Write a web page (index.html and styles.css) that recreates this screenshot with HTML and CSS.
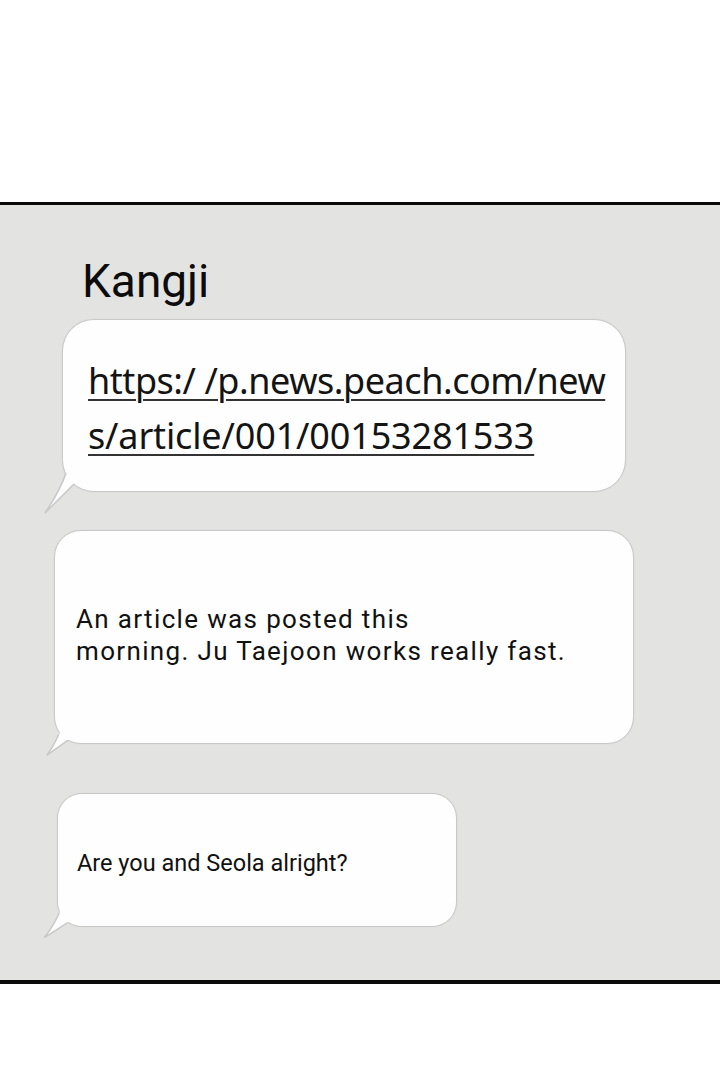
FILE: index.html
```html
<!DOCTYPE html>
<html lang="en">
<head>
<meta charset="utf-8">
<title>Kangji</title>
<link rel="stylesheet" href="styles.css">
</head>
<body>
<div class="top-space"></div>
<section class="panel">
  <h1 class="name">Kangji</h1>
  <div class="bubble bubble-link">
    <p class="link-text"><span class="u">https:/ /p.news.peach.com/new</span><br><span class="u u-wide">s/article/001/00153281533</span></p>
    <svg class="tail" width="50" height="50" viewBox="0 0 50 50">
      <path class="tail-fill" d="M24 10 Q18 28 3 50 L32 21 L36 17 L28 8 Z"/>
      <path class="tail-stroke" d="M24 10 Q18 28 3 50 L32 21"/>
    </svg>
  </div>
  <div class="bubble bubble-msg">
    <p class="msg-text">An article was posted this<br>morning. Ju Taejoon works really fast.</p>
    <svg class="tail" width="50" height="50" viewBox="0 0 50 50">
      <path class="tail-fill" d="M24.7 19.3 Q20 31 12.7 40.3 L33.7 25.3 L37 21 L29 15 Z"/>
      <path class="tail-stroke" d="M24.7 19.3 Q20 31 12.7 40.3 L33.7 25.3"/>
    </svg>
  </div>
  <div class="bubble bubble-short">
    <p class="short-text">Are you and Seola alright?</p>
    <svg class="tail" width="50" height="50" viewBox="0 0 50 50">
      <path class="tail-fill" d="M22.3 14.7 Q16.5 28 7.3 39.7 L30.7 24.7 L35 20 L27 11 Z"/>
      <path class="tail-stroke" d="M22.3 14.7 Q16.5 28 7.3 39.7 L30.7 24.7"/>
    </svg>
  </div>
</section>
</body>
</html>
```

FILE: styles.css
```css
* { box-sizing: border-box; }

html, body {
  margin: 0;
  padding: 0;
  background: #ffffff;
}

body {
  width: 720px;
  height: 1080px;
  overflow: hidden;
  font-family: Roboto, "Liberation Sans", sans-serif;
  color: #111111;
}

.top-space {
  height: 202px;
}

.panel {
  height: 782px;
  background: #e3e3e1;
  border-top: 3px solid #0a0a0a;
  border-bottom: 4px solid #0a0a0a;
  padding-top: 53px;
  display: flex;
  flex-direction: column;
  align-items: flex-start;
}

.name {
  margin: 0 0 15px 82px;
  font-family: Roboto, "Liberation Sans", sans-serif;
  font-weight: 400;
  font-size: 46px;
  line-height: 46px;
  color: #0c0c0c;
}

.bubble {
  position: relative;
  background: #fefefe;
  border: 1.5px solid #c8c8c8;
  box-shadow: 0 0 2px rgba(0, 0, 0, 0.06);
}

.bubble p {
  margin: 0;
}

.bubble-link {
  margin-left: 62px;
  width: 564px;
  height: 173px;
  border-radius: 32px;
  padding: 33px 0 0 25px;
}

.link-text {
  font-family: "Noto Sans", "DejaVu Sans", sans-serif;
  font-size: 36px;
  line-height: 55px;
  color: #141414;
  letter-spacing: -0.45px;
}

.link-text .u {
  text-decoration: underline;
  text-decoration-thickness: 1.5px;
  text-underline-offset: 5px;
  text-decoration-color: #333333;
}

.link-text .u-wide {
  letter-spacing: -0.15px;
}

.bubble-msg {
  margin-top: 38px;
  margin-left: 54px;
  width: 580px;
  height: 214px;
  border-radius: 27px;
  padding: 0 0 5px 21px;
  display: flex;
  align-items: center;
}

.msg-text {
  font-size: 26px;
  line-height: 32px;
  letter-spacing: 1.35px;
  color: #111111;
}

.bubble-short {
  margin-top: 49px;
  margin-left: 57px;
  width: 400px;
  height: 134px;
  border-radius: 25px;
  padding: 6px 0 0 19px;
  display: flex;
  align-items: center;
}

.short-text {
  font-size: 23.5px;
  line-height: 28px;
  color: #111111;
}

.tail {
  position: absolute;
  left: -21.5px;
  bottom: -21.5px;
  overflow: visible;
}

.tail-fill {
  fill: #fefefe;
}

.tail-stroke {
  fill: none;
  stroke: #c8c8c8;
  stroke-width: 1.5;
  stroke-linejoin: miter;
}
```
